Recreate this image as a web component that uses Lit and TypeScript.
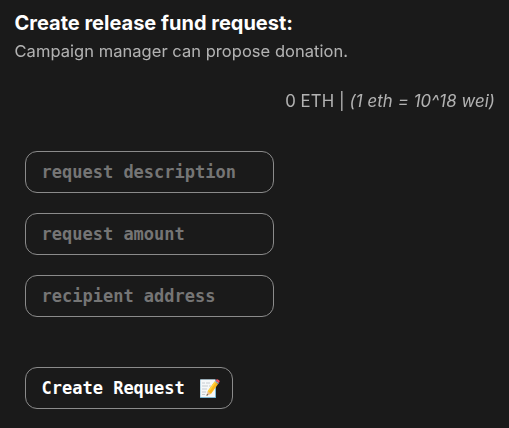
import { LitElement, html, css } from "lit";
import { customElement } from "lit/decorators.js";

@customElement("app-root")
export class AppRoot extends LitElement {
  static styles = css`
    :host {
      display: block;
      box-sizing: border-box;
      height: 428px;
      padding: 10px 14px 0 14.5px;
      background: #1a1a1a;
      color: #fff;
      font: 400 16.5px/26px Inter, sans-serif;
      overflow: hidden;
    }
    .title {
      margin: 0;
      font-size: 20px;
      font-weight: 700;
      line-height: 27px;
      color: #fff;
    }
    .intro {
      margin: 1px 0 0;
      opacity: 0.67;
      will-change: opacity;
      letter-spacing: 0.04px;
    }
    .balance {
      margin: 24px 0 0;
      text-align: right;
      opacity: 0.67;
      will-change: opacity;
      font-size: 16.75px;
      letter-spacing: 0.1px;
    }
    .form {
      display: flex;
      flex-direction: column;
      align-items: flex-start;
      gap: 20px;
      margin: 37px 0 0 10.5px;
    }
    .field,
    .submit {
      box-sizing: border-box;
      height: 42px;
      padding: 0 15.5px;
      border: 1px solid #8b8b8b;
      border-radius: 12px;
      background: #1a1a1a;
      color: #fff;
      font: 700 17px "DejaVu Sans Mono", monospace;
    }
    .field {
      width: 249px;
    }
    .field::placeholder {
      color: #757575;
      opacity: 1;
    }
    .submit {
      display: flex;
      align-items: center;
      width: 208px;
      margin-top: 30px;
      white-space: nowrap;
    }
    .memo {
      flex: none;
      width: 21px;
      height: 21px;
      margin-left: 14px;
    }
  `;

  render() {
    return html`
      <h1 class="title">Create release fund request:</h1>
      <p class="intro">Campaign manager can propose donation.</p>
      <p class="balance">0 ETH | <em>(1 eth = 10^18 wei)</em></p>
      <form class="form">
        <input class="field" placeholder="request description" />
        <input class="field" placeholder="request amount" />
        <input class="field" placeholder="recipient address" />
        <button class="submit" type="button">
          Create Request
          <svg class="memo" viewBox="0 0 21 21" aria-hidden="true">
            <path d="M1 1.5h16V20H1z" fill="#5fa9cc" />
            <path d="M1.4 1.5h14.8v17.7H1.4z" fill="#f5f7f8" />
            <path
              d="M3 5h3M7 5h4M3 8h6M10 8h2M3 11h5M3 14h4M3 16.5h3"
              stroke="#b9c0c5"
              stroke-width="0.8"
            />
            <path d="M7.5 17.8l1.2-4.5 3.2 2.6z" fill="#e6bd91" />
            <path d="M7.5 17.8l.5-1.8 1.2.9z" fill="#343434" />
            <path d="M8.7 13.3L15.6 3.6l3.5 2.5-7.2 9.8z" fill="#f9b51c" />
            <path d="M8.7 13.3L15.6 3.6l1.2.8-7 9.8z" fill="#ffd23f" />
            <path d="M15.6 3.6l.9-1.2 3.5 2.5-.9 1.2z" fill="#9db8c4" />
            <path
              d="M16.5 2.4l.5-.7q.8-1 2-.2l1 .7q1.1.8.4 1.9l-.5.8z"
              fill="#f0525d"
            />
          </svg>
        </button>
      </form>
    `;
  }
}
